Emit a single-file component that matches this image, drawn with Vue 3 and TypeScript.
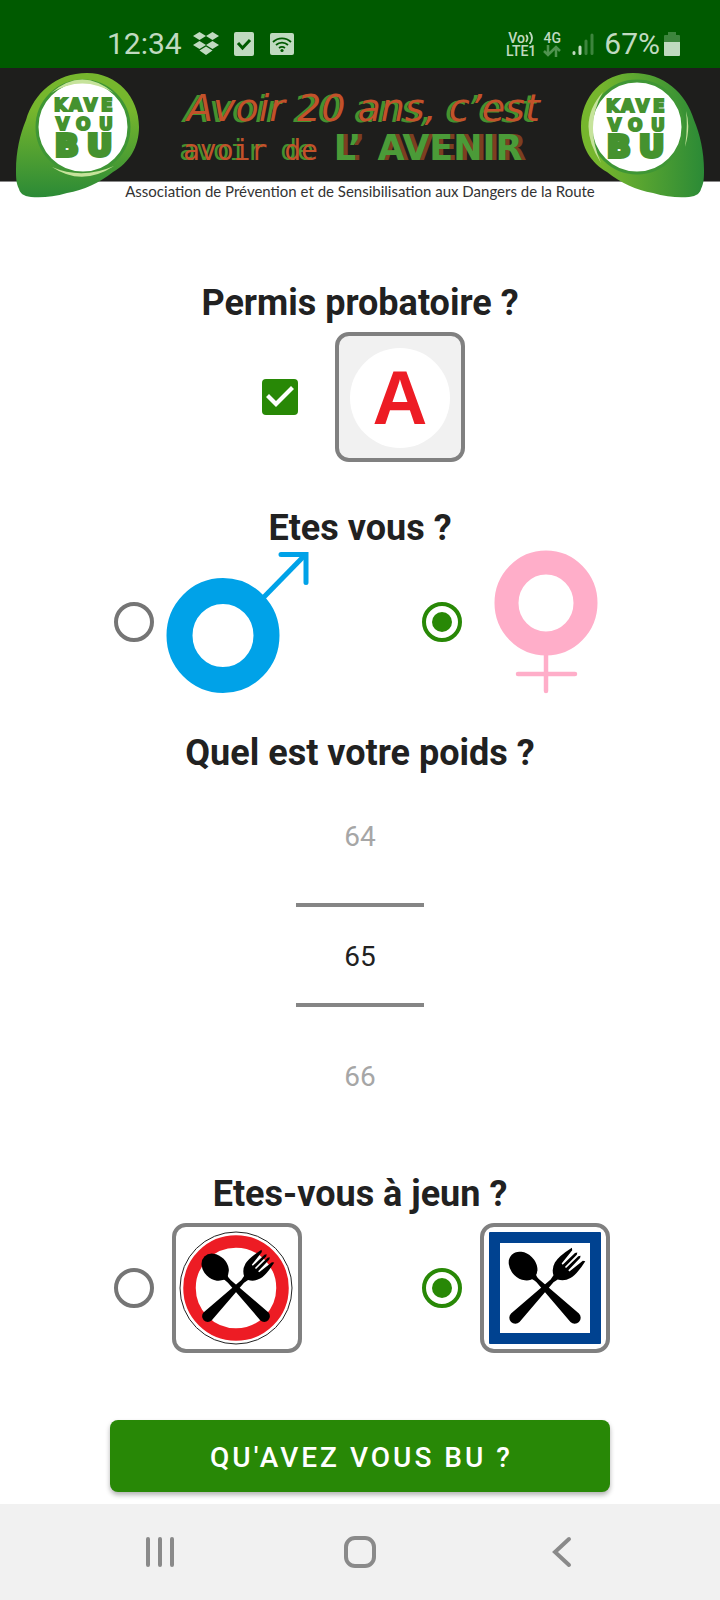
<script setup lang="ts">
import { ref } from 'vue'

const probationary = ref<boolean>(true)
const gender = ref<'homme' | 'femme'>('femme')
const weight = ref<number>(65)
const fasting = ref<'oui' | 'non'>('non')
const logos: string[] = ['left', 'right']
</script>

<template>
  <div class="screen">
    <div class="status">
      <div class="status-group">
        <span class="clock">12:34</span>
        <svg class="dropbox" width="26" height="24" viewBox="0 0 26 24" fill="currentColor">
          <path d="M6.500 0 13 4 6.500 8 0 4zM19.500 0 26 4 19.500 8 13 4zM6.500 9 13 13 6.500 17 0 13zM19.500 9 26 13 19.500 17 13 13zM13 14.500 19.500 18.500 13 23 6.500 18.500z" />
        </svg>
        <svg class="task" width="20" height="24" viewBox="0 0 20 24">
          <rect width="20" height="24" rx="2" fill="currentColor" />
          <path d="M4 11l4.500 5 7.500-8" fill="none" stroke="#005a00" stroke-width="3" />
        </svg>
        <svg width="24" height="24" viewBox="0 0 24 24">
          <rect y="1" width="24" height="22" rx="2" fill="currentColor" />
          <g fill="none" stroke="#005a00" stroke-width="1.800">
            <path d="M3 10a13 13 0 0 1 18 0M6 13a9 9 0 0 1 12 0M9 16a5 5 0 0 1 6 0" />
          </g>
          <circle cx="12" cy="18.500" r="1.600" fill="#005a00" />
        </svg>
      </div>
      <div class="status-group">
        <span class="tiny">
          <span class="volte">Vo<svg width="9" height="12" viewBox="0 0 9 12" fill="none" stroke="currentColor" stroke-width="1.800"><path d="M1 3q3 3 0 7M4.500 0q5 6 0 12" /></svg></span>
          <span>LTE1</span>
        </span>
        <span class="tiny network">
          <span>4G</span>
          <svg width="18" height="12" viewBox="0 0 18 12" fill="none" stroke="#4f934f" stroke-width="2.500"><path d="M5 0v10M1 6l4 4 4-4M13 12V2M9 6l4-4 4 4" /></svg>
        </span>
        <svg class="signal" width="22" height="24" viewBox="0 0 22 24" stroke-width="3" stroke-linecap="round">
          <path d="M2 20.500v1M8 15v6.500" stroke="currentColor" />
          <path d="M14 9v12.500M20 3v18.500" stroke="#3d853d" />
        </svg>
        <span class="clock">67%</span>
        <svg class="battery" width="16" height="24" viewBox="0 0 16 24">
          <path d="M4 0h8v3h3q1 0 1 1v7H0V4q0-1 1-1h3z" fill="#3d853d" />
          <path d="M0 10h16v13q0 1-1 1H1q-1 0-1-1z" fill="currentColor" />
        </svg>
      </div>
    </div>

    <header class="banner">
      <div class="band">
        <p class="script">Avoir 20 ans, c’est</p>
        <p class="future"><span class="mono">avoir de</span><strong>L’</strong><strong>AVENIR</strong></p>
      </div>
      <p class="association">Association de Prévention et de Sensibilisation aux Dangers de la Route</p>
      <svg v-for="side in logos" :key="side" class="logo" :class="side" width="124" height="125" viewBox="0 0 124 125" role="img" aria-label="Kave vou bu">
        <defs>
          <linearGradient id="leaf-left" x1="0" y1="0" x2="0" y2="1">
            <stop offset="0.300" stop-color="#76b62d" />
            <stop offset="1" stop-color="#2b8a36" />
          </linearGradient>
          <linearGradient id="leaf-right" x1="1" y1="0" x2="0" y2="0">
            <stop offset="0.150" stop-color="#76b62d" />
            <stop offset="1" stop-color="#2b8a36" />
          </linearGradient>
        </defs>
        <g :class="{ mirrored: side === 'right' }">
          <path d="M71 0C101 0 123 24 123 54C123 74 113 90 97 99C83 110 68 117 51 120C38 124 25 125 15 124C7 123 4 120 3 116C0 110 0 104 0 97C0 79 4 61 10 47C18 20 40 0 71 0Z" :fill="`url(#leaf-${side})`" />
          <circle cx="67" cy="54" r="46" fill="#fff" stroke="#3f9635" stroke-width="3" />
          <path v-if="side === 'left'" d="M35 20Q66-7 98 20Q66 1 35 20M36 94Q66 114 98 93Q66 107 36 94" fill="#c6e39b" />
          <path v-else d="M101 19Q129 50 103 90Q120 52 101 19M18 38Q13 54 19 74Q16 54 18 38" fill="#c6e39b" />
        </g>
        <g :class="{ shifted: side === 'right' }" class="letters">
          <text class="small" y="38"><tspan x="38">K</tspan><tspan x="53">A</tspan><tspan x="68">V</tspan><tspan x="85">E</tspan></text>
          <text class="small" y="57"><tspan x="40">V</tspan><tspan x="60">O</tspan><tspan x="83">U</tspan></text>
          <text class="large" y="83"><tspan x="39">B</tspan><tspan x="71">U</tspan></text>
        </g>
      </svg>
    </header>

    <form class="questions" @submit.prevent>
      <section>
        <h2 id="q-permit">Permis probatoire ?</h2>
        <div class="choices single">
          <label class="choice">
            <input v-model="probationary" class="tick" type="checkbox" aria-labelledby="q-permit" />
            <svg class="sign" width="130" height="130" viewBox="0 0 130 130">
              <rect x="2" y="2" width="126" height="126" rx="12" fill="#f1f1f1" stroke="#808080" stroke-width="4" />
              <circle cx="65" cy="66" r="50" fill="#fff" />
              <text class="plate" x="65" y="92" text-anchor="middle">A</text>
            </svg>
          </label>
        </div>
      </section>

      <section>
        <h2>Etes vous ?</h2>
        <div class="choices">
          <label class="choice">
            <input v-model="gender" type="radio" name="gender" value="homme" aria-label="Homme" />
            <svg class="symbol" width="144" height="144" viewBox="0 0 144 144" fill="none" stroke="#00a2e8">
              <ellipse cx="58" cy="85.500" rx="43.500" ry="44.500" stroke-width="26" />
              <path d="M98 48 140 5" stroke-width="5" />
              <path d="M116 4.500h25v28" stroke-width="5" stroke-linecap="round" />
            </svg>
          </label>
          <label class="choice">
            <input v-model="gender" type="radio" name="gender" value="femme" aria-label="Femme" />
            <svg class="symbol" width="144" height="144" viewBox="0 0 144 144" fill="none" stroke="#ffaec9">
              <ellipse cx="73" cy="53" rx="39.500" ry="40.500" stroke-width="24" />
              <path d="M73 104v37M45 124h57" stroke-width="4.500" stroke-linecap="round" />
            </svg>
          </label>
        </div>
      </section>

      <section>
        <h2 id="q-weight">Quel est votre poids ?</h2>
        <div class="picker">
          <button type="button" @click="weight--">{{ weight - 1 }}</button>
          <input v-model.number="weight" type="text" inputmode="numeric" aria-labelledby="q-weight" />
          <button type="button" @click="weight++">{{ weight + 1 }}</button>
        </div>
      </section>

      <section>
        <h2>Etes-vous à jeun ?</h2>
        <div class="choices">
          <label class="choice">
            <input v-model="fasting" type="radio" name="fasting" value="oui" aria-label="Oui, à jeun" />
            <svg class="sign" width="130" height="130" viewBox="0 0 130 130">
              <defs>
                <g id="cutlery" stroke="none">
                  <g transform="rotate(-45)">
                    <ellipse cy="-31" rx="12.500" ry="16" />
                    <path d="M-4-17Q-2-15-2-10L-6 42A6 6 0 0 0 6 42L2-10Q2-15 4-17Z" />
                  </g>
                  <g transform="rotate(45)">
                    <path d="M-9.500-47.500-7.500-46-5.500-29H-4L-3.600-46-2.300-48-1-46-.8-29H.8L1-46 2.300-48 3.600-46 4-29H5.500L7.500-46 9.500-47.500Q13-32 11-25Q9-18 3-15L2-10 6 42A6 6 0 0 1-6 42L-2-10-3-15Q-9-18-11-25Q-13-32-9.500-47.500Z" />
                  </g>
                </g>
              </defs>
              <rect x="2" y="2" width="126" height="126" rx="12" fill="#fff" stroke="#808080" stroke-width="4" />
              <circle cx="64" cy="65" r="56" fill="none" stroke="#222" />
              <circle cx="64" cy="65" r="46.500" fill="none" stroke="#ed1c24" stroke-width="12.500" />
              <use href="#cutlery" transform="translate(64 65) scale(0.950)" />
            </svg>
          </label>
          <label class="choice">
            <input v-model="fasting" type="radio" name="fasting" value="non" aria-label="Non, j’ai mangé" />
            <svg class="sign" width="130" height="130" viewBox="0 0 130 130">
              <rect x="2" y="2" width="126" height="126" rx="12" fill="#fff" stroke="#808080" stroke-width="4" />
              <rect x="9" y="9" width="112" height="112" rx="1" fill="#004290" />
              <rect x="20" y="20" width="90" height="90" fill="#fff" />
              <use href="#cutlery" transform="translate(65 65)" />
            </svg>
          </label>
        </div>
      </section>

      <button class="submit" type="submit">QU'AVEZ VOUS BU ?</button>
    </form>

    <nav class="system">
      <button type="button" aria-label="Applications récentes">
        <svg width="34" height="34" viewBox="0 0 34 34"><path d="M5 4v26M17 4v26M29 4v26" /></svg>
      </button>
      <button type="button" aria-label="Accueil">
        <svg width="34" height="34" viewBox="0 0 34 34"><rect x="3" y="3" width="28" height="28" rx="9" /></svg>
      </button>
      <button type="button" aria-label="Retour">
        <svg width="34" height="34" viewBox="0 0 34 34"><path d="M26 4 12 17l14 13" /></svg>
      </button>
    </nav>
  </div>
</template>

<style>
body {
  margin: 0;
  background: #fff;
}
</style>

<style scoped>
.screen {
  display: flex;
  flex-direction: column;
  min-height: 100vh;
  color: #212121;
  font-family: Roboto, "Liberation Sans", sans-serif;
}

h2,
p {
  margin: 0;
}

svg {
  display: block;
  flex: none;
}

.status {
  display: flex;
  justify-content: space-between;
  align-items: center;
  height: 48px;
  padding: 20px 40px 0 107px;
  background: #005a00;
  color: #c0dac0;
}

.status-group {
  display: flex;
  align-items: center;
}

.clock {
  font-size: 30px;
  line-height: 36px;
}

.dropbox {
  margin-left: 11px;
}

.task {
  margin: 0 16px 0 15px;
}

.tiny {
  display: flex;
  flex-direction: column;
  align-items: center;
  gap: 1px;
  font-size: 14px;
  font-weight: 500;
  line-height: 12px;
}

.volte {
  display: flex;
}

.network {
  margin: 0 11px 0 7px;
}

.signal {
  margin-right: 10px;
}

.battery {
  margin-left: 4px;
}

.banner {
  position: relative;
  height: 132px;
}

.band {
  box-sizing: border-box;
  height: 114px;
  padding: 18px 139px 0 183px;
  border-bottom: 1px solid #888;
  background: #1e1e1c;
  white-space: nowrap;
}

.script {
  padding-left: 4px;
  color: #c2522a;
  font-family: "DejaVu Sans", sans-serif;
  font-size: 38px;
  font-style: italic;
  font-weight: 200;
  line-height: 44px;
  text-shadow: -4px 1px 0 #45922f;
}

.future {
  display: flex;
  align-items: baseline;
  gap: 16px;
  line-height: 36px;
}

.mono {
  color: #c2522a;
  font-family: "DejaVu Sans Mono", monospace;
  font-size: 28px;
  text-shadow: -4px 0 0 #45922f;
}

.future strong {
  color: #4b9b38;
  font-family: "DejaVu Sans", sans-serif;
  font-size: 35px;
  text-shadow: 4px 0 0 #7d3f20;
}

.association {
  color: #333;
  font-family: Lato, "Open Sans", sans-serif;
  font-size: 15px;
  line-height: 18px;
  text-align: center;
}

.logo {
  position: absolute;
  top: 5px;
}

.logo.left {
  left: 16px;
}

.logo.right {
  right: 16px;
}

.mirrored {
  transform: translateX(124px) scaleX(-1);
}

.shifted {
  transform: translate(-12px, 1px);
}

.letters {
  fill: #45922f;
  stroke: #45922f;
  stroke-width: 2px;
  font-family: "DejaVu Sans", sans-serif;
  font-weight: 700;
}

.small {
  font-size: 17px;
}

.large {
  font-size: 31px;
  stroke-width: 4px;
}

.questions {
  flex: 1;
  display: flex;
  flex-direction: column;
  gap: 45px;
  width: 100%;
  max-width: 720px;
  margin: 0 auto;
  padding: 82px 110px 12px;
  box-sizing: border-box;
}

h2 {
  margin-bottom: 8px;
  font-size: 36px;
  font-weight: 700;
  line-height: 42px;
  text-align: center;
}

.choices {
  display: flex;
  justify-content: space-between;
}

.single {
  justify-content: center;
}

.choice {
  display: flex;
  align-items: center;
  gap: 18px;
}

.symbol {
  margin: -7px;
}

.plate {
  fill: #ed1c24;
  font: 700 76px "Liberation Sans", sans-serif;
}

input[type="radio"],
.tick {
  display: grid;
  place-items: center;
  flex: none;
  box-sizing: border-box;
  appearance: none;
}

input[type="radio"] {
  width: 40px;
  height: 40px;
  margin: 0 0 0 4px;
  border: 4px solid #757575;
  border-radius: 50%;
}

input[type="radio"]:checked {
  border-color: #288806;
}

input[type="radio"]:checked::before {
  width: 20px;
  height: 20px;
  border-radius: 50%;
  background: #288806;
  content: "";
}

.tick {
  width: 36px;
  height: 36px;
  margin: 0 19px 0 7px;
  border: 4px solid #757575;
  border-radius: 4px;
}

.tick:checked {
  border: 0;
  background: #288806;
}

.tick:checked::before {
  width: 36px;
  height: 36px;
  background: #fff;
  clip-path: polygon(4px 18px, 7px 15px, 14px 22px, 29px 7px, 32px 10px, 14px 28px);
  content: "";
}

.picker {
  display: flex;
  flex-direction: column;
  align-items: center;
  gap: 16px;
  padding: 1px 0;
}

.picker button,
.picker input {
  box-sizing: border-box;
  width: 128px;
  height: 104px;
  margin: 0;
  padding: 2px 0 0;
  border: 0;
  border-radius: 0;
  background: none;
  color: #212121;
  font: 400 28px Roboto, sans-serif;
  text-align: center;
}

.picker button {
  color: #a6a6a6;
}

.picker input {
  border: solid #858585;
  border-width: 4px 0;
}

.submit {
  height: 72px;
  margin-top: 22px;
  padding: 2px 0 0 3px;
  border: 0;
  border-radius: 8px;
  background: #288806;
  box-shadow: 0 3px 5px rgba(0, 0, 0, 0.3);
  color: #fff;
  font: 500 28px Roboto, sans-serif;
  letter-spacing: 3px;
}

.system {
  display: flex;
  height: 96px;
  padding: 0 60px;
  background: #f1f1f1;
}

.system button {
  display: grid;
  flex: 1;
  place-items: center;
  padding: 0;
  border: 0;
  background: none;
}

.system svg {
  fill: none;
  stroke: #8a8a8a;
  stroke-width: 4px;
  stroke-linecap: round;
}
</style>
